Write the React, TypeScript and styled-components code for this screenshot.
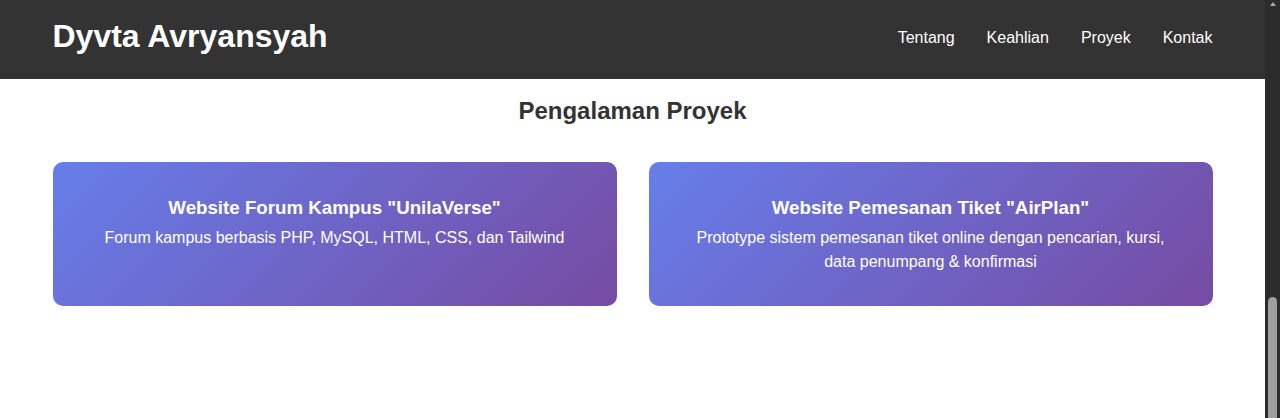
import React from "react";
import styled, { createGlobalStyle } from "styled-components";

const GlobalStyle = createGlobalStyle`
  * {
    box-sizing: border-box;
  }
  html, body {
    margin: 0;
    height: 100%;
    overflow: hidden;
    background: #fff;
  }
  body {
    color: #333;
    font-family: "Liberation Sans", Arial, sans-serif;
    line-height: 1.5;
  }
`;

const projects = [
  {
    title: 'Website Forum Kampus "UnilaVerse"',
    desc: "Forum kampus berbasis PHP, MySQL, HTML, CSS, dan Tailwind",
  },
  {
    title: 'Website Pemesanan Tiket "AirPlan"',
    desc: "Prototype sistem pemesanan tiket online dengan pencarian, kursi, data penumpang & konfirmasi",
  },
];

const App: React.FC = () => {
  return (
    <>
      <GlobalStyle />
      <Window>
        <Main>
          <Header>
            <HeaderInner>
              <Logo>Dyvta Avryansyah</Logo>
              <Nav>
                <NavLink href="#tentang">Tentang</NavLink>
                <NavLink href="#keahlian">Keahlian</NavLink>
                <NavLink href="#proyek">Proyek</NavLink>
                <NavLink href="#kontak">Kontak</NavLink>
              </Nav>
            </HeaderInner>
          </Header>

          <ProjectSection id="proyek">
            <Container>
              <SectionTitle>Pengalaman Proyek</SectionTitle>
              <ProjectGrid>
                {projects.map((p) => (
                  <ProjectCard key={p.title}>
                    <ProjectTitle>{p.title}</ProjectTitle>
                    <ProjectDesc>{p.desc}</ProjectDesc>
                  </ProjectCard>
                ))}
              </ProjectGrid>
            </Container>
          </ProjectSection>
        </Main>

        {/* scrollbar halaman (posisi paling bawah) */}
        <ScrollRail aria-hidden="true">
          <ScrollArrow />
          <ScrollThumb />
        </ScrollRail>
      </Window>
    </>
  );
};

export default App;

const Window = styled.div`
  display: flex;
  height: 100vh;
  background: #fff;
`;

const Main = styled.div`
  flex: 1;
  min-width: 0;
  display: flex;
  flex-direction: column;
`;

const Header = styled.header`
  background: #333;
  color: #fff;
  padding: 12px 0 19px;
`;

const Container = styled.div`
  max-width: 1160px;
  margin: 0 auto;
`;

const HeaderInner = styled(Container)`
  display: flex;
  align-items: center;
  justify-content: space-between;
`;

const Logo = styled.h1`
  margin: 0;
  font-size: 32px;
  line-height: 48px;
  font-weight: 700;
`;

const Nav = styled.nav`
  display: flex;
  gap: 32px;
  margin-top: 3px;
`;

const NavLink = styled.a`
  color: #fff;
  text-decoration: none;
  font-size: 16px;
`;

const ProjectSection = styled.section`
  padding: 14px 0 0;
`;

const SectionTitle = styled.h2`
  margin: 0 0 33px;
  text-align: center;
  font-size: 24px;
  font-weight: 700;
  color: #333;
`;

const ProjectGrid = styled.div`
  display: grid;
  grid-template-columns: repeat(2, 1fr);
  gap: 32px;
`;

const ProjectCard = styled.div`
  padding: 32px;
  border-radius: 10px;
  background: linear-gradient(135deg, #667eea 0%, #764ba2 100%);
  color: #fff;
  text-align: center;
`;

const ProjectTitle = styled.h3`
  margin: 0 0 4px;
  font-size: 18.72px;
  font-weight: 700;
`;

const ProjectDesc = styled.p`
  margin: 0;
  font-size: 16px;
`;

const ScrollRail = styled.aside`
  width: 15px;
  flex-shrink: 0;
  display: flex;
  flex-direction: column;
  align-items: center;
  background: #2c2c2c;
`;

const ScrollArrow = styled.span`
  margin-top: 2px;
  width: 0;
  height: 0;
  border-style: solid;
  border-width: 0 3.5px 4px;
  border-color: transparent transparent #a8a8a8;
`;

const ScrollThumb = styled.span`
  margin-top: auto;
  width: 9px;
  height: 121px;
  border-radius: 5px 5px 0 0;
  background: #9f9f9f;
`;
